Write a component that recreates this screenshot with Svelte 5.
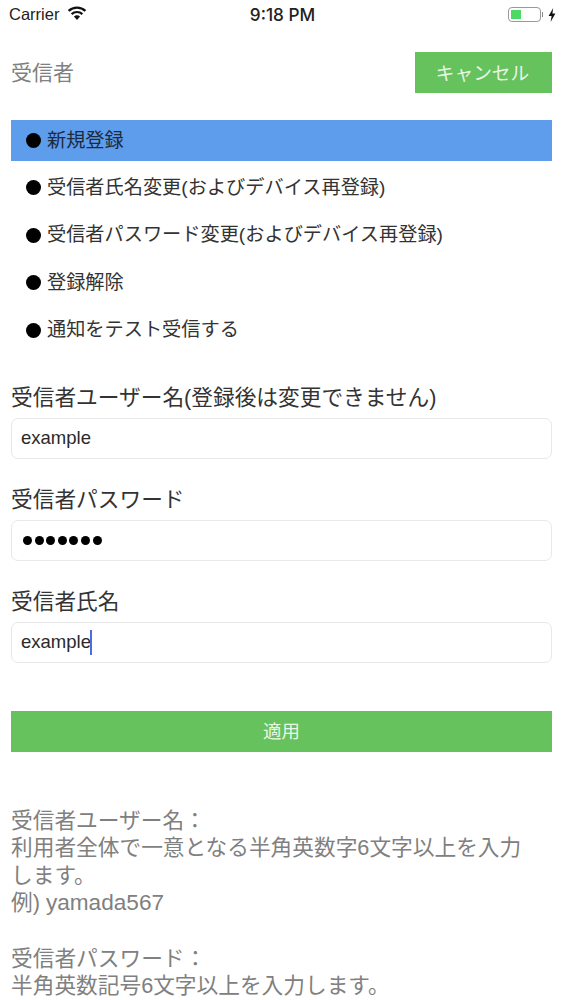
<script>
  const menu = [
    { label: "新規登録", active: true },
    { label: "受信者氏名変更(およびデバイス再登録)" },
    { label: "受信者パスワード変更(およびデバイス再登録)" },
    { label: "登録解除" },
    { label: "通知をテスト受信する" }
  ];
  const dots = [1, 2, 3, 4, 5, 6, 7];
</script>

<div class="page">
  <div class="status">
    <div class="status-left">
      <span>Carrier</span>
      <svg class="wifi" width="20" height="14" viewBox="0 0 20 14">
        <path d="M10 14 L6.9 10.6 A4.6 4.6 0 0 1 13.1 10.6 Z" fill="#111" />
        <path d="M4.6 8.1 A8 8 0 0 1 15.4 8.1" fill="none" stroke="#111" stroke-width="2.2" />
        <path d="M1.6 4.9 A12.4 12.4 0 0 1 18.4 4.9" fill="none" stroke="#111" stroke-width="2.4" />
      </svg>
    </div>
    <div class="time">9:18 PM</div>
    <div class="status-right">
      <div class="battery"><div class="level"></div></div>
      <div class="nub"></div>
      <svg class="bolt" width="8" height="14" viewBox="0 0 8 14">
        <path d="M5.2 0 L0.6 8 H3.6 L2.6 14 L7.4 5.6 H4.4 Z" fill="#111" />
      </svg>
    </div>
  </div>

  <div class="main">
    <div class="top">
      <div class="title">受信者</div>
      <button class="cancel">キャンセル</button>
    </div>

    <ul class="menu">
      {#each menu as item}
        <li class:active={item.active}>
          <span class="bullet"></span>
          <span class="menu-text">{item.label}</span>
        </li>
      {/each}
    </ul>

    <div class="field first">
      <div class="label">受信者ユーザー名(登録後は変更できません)</div>
      <div class="input">example</div>
    </div>
    <div class="field">
      <div class="label">受信者パスワード</div>
      <div class="input dots">
        {#each dots as d}
          <span class="dot"></span>
        {/each}
      </div>
    </div>
    <div class="field">
      <div class="label">受信者氏名</div>
      <div class="input">example<span class="caret"></span></div>
    </div>

    <button class="apply">適用</button>

    <div class="help">
      <p>受信者ユーザー名：<br />利用者全体で一意となる半角英数字6文字以上を入力します。<br />例) <span class="latin">yamada567</span></p>
      <p>受信者パスワード：<br />半角英数記号6文字以上を入力します。</p>
    </div>
  </div>
</div>

<style>
  :global(body) {
    margin: 0;
    background: #fff;
  }

  .page {
    width: 563px;
    height: 1000px;
    overflow: hidden;
    font-family: "Liberation Sans", "Noto Sans CJK JP", sans-serif;
    color: #222;
  }

  /* ステータスバー */
  .status {
    height: 28px;
    padding: 1px 7px 0 9px;
    box-sizing: border-box;
    display: grid;
    grid-template-columns: 1fr auto 1fr;
    align-items: center;
    font-size: 16.5px;
    color: #222;
  }

  .status-left {
    display: flex;
    align-items: center;
    gap: 8px;
  }

  .wifi {
    margin-top: -3px;
  }

  .time {
    font-family: Inter, "Liberation Sans", sans-serif;
    font-size: 17.2px;
    font-weight: 500;
  }

  .status-right {
    display: flex;
    justify-content: flex-end;
    align-items: center;
  }

  .battery {
    width: 33px;
    height: 15px;
    box-sizing: border-box;
    border: 1px solid #999;
    border-radius: 4px;
    padding: 2px;
  }

  .level {
    width: 10px;
    height: 100%;
    background: #4cd964;
  }

  .nub {
    width: 1px;
    height: 5px;
    margin-left: 1px;
    margin-right: 5px;
    background: #888;
  }

  /* 本体 */
  .main {
    padding: 24px 11px 0;
  }

  .top {
    display: flex;
    justify-content: space-between;
    align-items: center;
  }

  .title {
    font-size: 21px;
    line-height: 28px;
    color: #808080;
  }

  button {
    border: none;
    color: #e9f6e6;
    background: #65c25c;
    font-family: inherit;
    padding: 0 0 3px;
  }

  .cancel {
    width: 137px;
    height: 41px;
    padding-right: 2px;
    font-size: 18.7px;
  }

  .menu {
    list-style: none;
    margin: 27px 0 0;
    padding: 0;
    display: flex;
    flex-direction: column;
    gap: 6.4px;
  }

  .menu li {
    height: 41px;
    padding-left: 15px;
    display: flex;
    align-items: center;
    gap: 6px;
    font-size: 19.2px;
    color: #333;
  }

  .menu li.active {
    background: #5e9cec;
    color: #1c2a3a;
  }

  .menu-text {
    line-height: 24px;
  }

  .bullet {
    width: 15px;
    height: 15px;
    border-radius: 50%;
    background: #000;
    flex-shrink: 0;
  }

  .field {
    margin-top: 27px;
  }

  .field.first {
    margin-top: 33px;
  }

  .label {
    font-size: 21.7px;
    line-height: 28px;
    margin-bottom: 6px;
    color: #333;
  }

  .input {
    height: 41px;
    box-sizing: border-box;
    border: 1px solid #e8e8e8;
    border-radius: 7px;
    padding-left: 9px;
    display: flex;
    align-items: center;
    font-size: 18.5px;
    color: #2a2a2a;
  }

  .input.dots {
    gap: 2.6px;
    padding-left: 11px;
  }

  .dot {
    width: 9px;
    height: 9px;
    border-radius: 50%;
    background: #000;
  }

  .caret {
    width: 2.5px;
    height: 25px;
    margin-left: -1px;
    background: #4a6ee0;
  }

  .apply {
    display: block;
    width: 100%;
    height: 41px;
    margin-top: 48px;
    font-size: 18.5px;
  }

  .help {
    margin-top: 55px;
    font-size: 21.7px;
    line-height: 27.6px;
    color: #808080;
  }

  .help p {
    margin: 0 0 27.6px;
    width: 520px;
  }

  .latin {
    font-size: 22.6px;
  }
</style>
